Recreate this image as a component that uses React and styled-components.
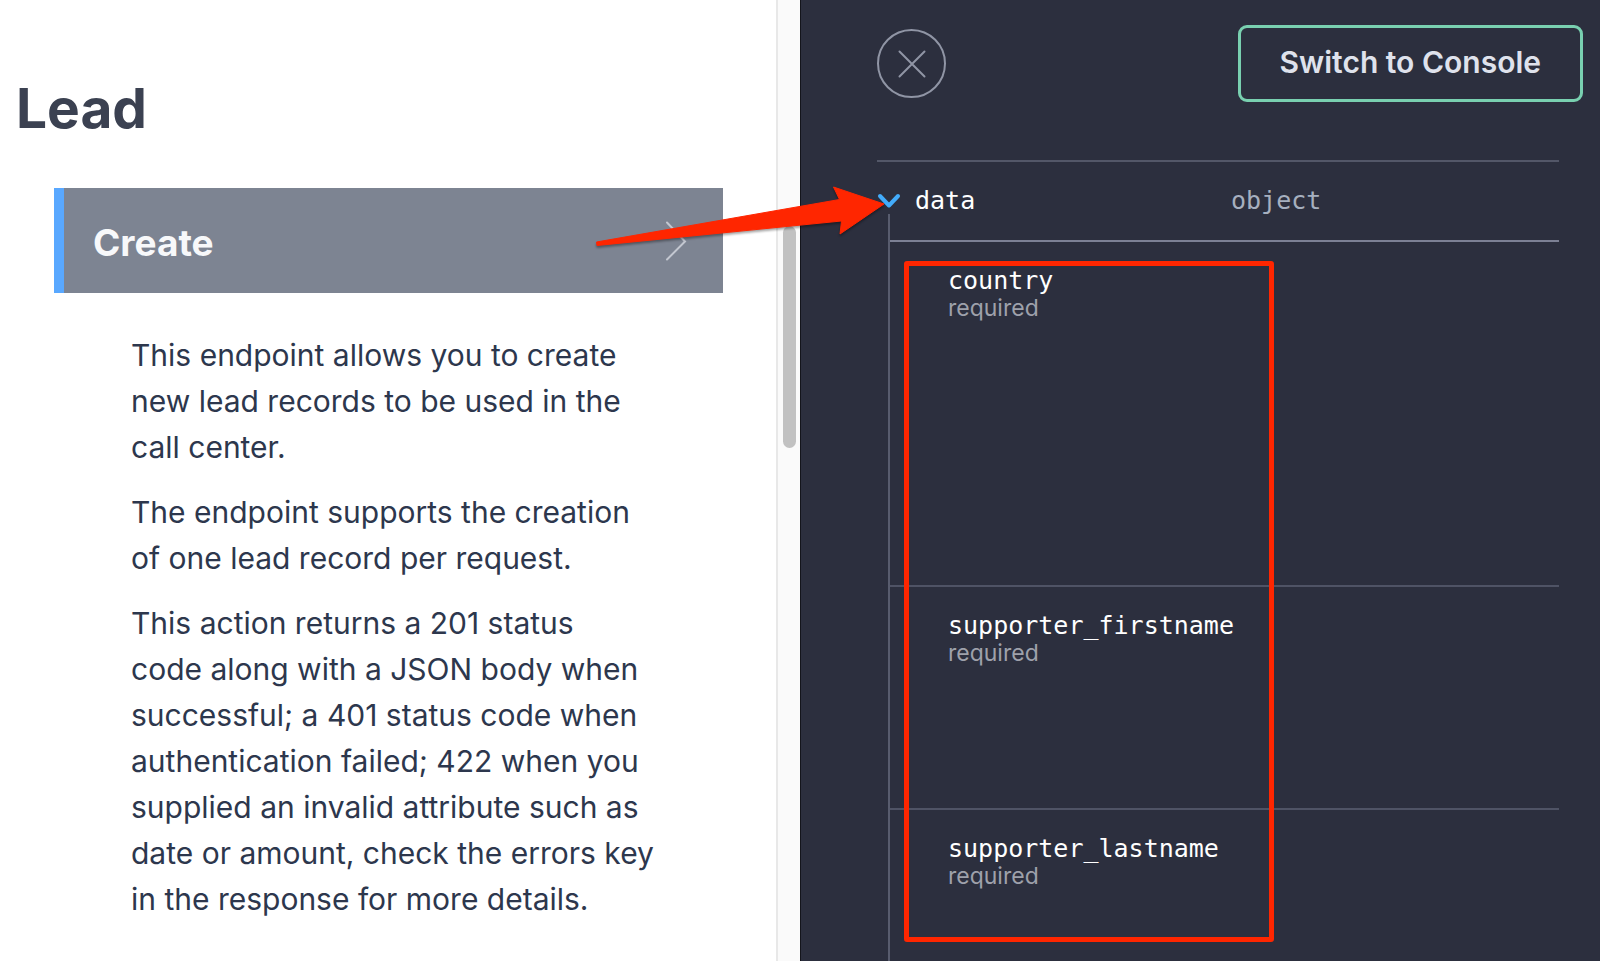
import React, { useState } from "react";
import styled, { createGlobalStyle } from "styled-components";

const GlobalStyle = createGlobalStyle`
  * {
    box-sizing: border-box;
  }

  body {
    margin: 0;
    background: #ffffff;
    font-family: Inter, "Liberation Sans", sans-serif;
  }

  h1, h2, p, ul {
    margin: 0;
    padding: 0;
  }

  button {
    font-family: inherit;
    cursor: pointer;
  }
`;

const Page = styled.div`
  position: relative;
  display: grid;
  grid-template-columns: 1fr 1fr;
  height: 100vh;
  overflow: hidden;
`;

const DocsPane = styled.main`
  display: flex;
  overflow: hidden;
`;

const Docs = styled.div`
  flex: 1;
  padding-top: 72px;
`;

const Title = styled.h1`
  padding-left: 16px;
  color: #3b4151;
  font-size: 55px;
  font-weight: 700;
  line-height: 72px;
`;

const Endpoint = styled.section`
  margin: 44px 53px 0 54px;
`;

const EndpointHeader = styled.button`
  display: flex;
  align-items: center;
  justify-content: space-between;
  width: 100%;
  height: 105px;
  padding: 0 36px 0 29px;
  border: 0;
  border-left: 10px solid #59a8ff;
  background: #7d8492;
  text-align: left;
`;

const EndpointName = styled.span`
  padding-top: 4px;
  color: #f7f8fa;
  font-size: 37px;
  font-weight: 700;
  line-height: 48px;
`;

const Description = styled.div`
  display: flex;
  flex-direction: column;
  gap: 19px;
  padding: 39px 0 0 77px;
`;

const Paragraph = styled.p`
  color: #2d374d;
  font-size: 30px;
  line-height: 46px;
  white-space: pre;
`;

const ScrollTrack = styled.div`
  width: 24px;
  padding: 226px 5px 0;
  border-left: 2px solid #e8e8e8;
  background: #fafafa;
`;

const ScrollThumb = styled.div`
  width: 13px;
  height: 222px;
  border-radius: 7px;
  background: #c1c1c1;
`;

const SchemaPane = styled.aside`
  display: flex;
  flex-direction: column;
  border-left: 1px solid #14151c;
  background: #2c2f3e;
`;

const Toolbar = styled.header`
  display: flex;
  align-items: center;
  justify-content: space-between;
  padding: 25px 17px 0 76px;
`;

const CloseButton = styled.button`
  display: flex;
  align-items: center;
  justify-content: center;
  width: 69px;
  height: 69px;
  padding: 0;
  border: 2px solid #9095a5;
  border-radius: 50%;
  background: transparent;
`;

const ConsoleButton = styled.button`
  height: 77px;
  padding: 0 39px 3px;
  border: 3px solid #79d0b0;
  border-radius: 9px;
  background: transparent;
  color: #dfe2ec;
  font-size: 30px;
  font-weight: 600;
`;

const Schema = styled.div`
  display: flex;
  flex: 1;
  flex-direction: column;
  margin: 58px 41px 0 76px;
  border-top: 2px solid #535768;
`;

const RootRow = styled.div`
  display: grid;
  grid-template-columns: 354px 1fr;
  align-items: center;
  height: 78px;
  font-family: "DejaVu Sans Mono", monospace;
  font-size: 25px;
  line-height: 28px;
`;

const Toggle = styled.button`
  display: flex;
  align-items: center;
  gap: 14px;
  padding: 0;
  border: 0;
  background: transparent;
  color: #ffffff;
  font-family: inherit;
  font-size: inherit;
  line-height: inherit;
`;

const TypeName = styled.span`
  color: #a6afbf;
`;

const FieldTree = styled.div`
  display: flex;
  flex: 1;
  flex-direction: column;
  margin: -26px 0 0 11px;
  padding-top: 26px;
  border-left: 2px solid #585c6e;
`;

const FieldList = styled.ul`
  border-top: 2px solid #7c8094;
  list-style: none;
`;

const Field = styled.li`
  height: ${(props) => props.$height}px;
  padding: 25px 0 0 58px;
  border-bottom: ${(props) => (props.$last ? "0" : "2px solid #4f5365")};
`;

const FieldName = styled.div`
  color: #ffffff;
  font-family: "DejaVu Sans Mono", monospace;
  font-size: 25px;
  line-height: 28px;
`;

const Required = styled.div`
  color: #9ea1ab;
  font-size: 23px;
  line-height: 26px;
`;

// annotations drawn over both panes
const Highlight = styled.div`
  position: absolute;
  top: 261px;
  left: calc(50% + 104px);
  width: 370px;
  height: 681px;
  border: 5px solid #ff2600;
  border-radius: 3px;
  pointer-events: none;
`;

const Arrow = styled.svg`
  position: absolute;
  top: 180px;
  left: calc(50% - 210px);
  filter: drop-shadow(0 2px 1px rgba(0, 0, 0, 0.35));
  pointer-events: none;
`;

const paragraphs = [
  [
    "This endpoint allows you to create",
    "new lead records to be used in the",
    "call center.",
  ],
  ["The endpoint supports the creation", "of one lead record per request."],
  [
    "This action returns a 201 status",
    "code along with a JSON body when",
    "successful; a 401 status code when",
    "authentication failed; 422 when you",
    "supplied an invalid attribute such as",
    "date or amount, check the errors key",
    "in the response for more details.",
  ],
];

const fields = [
  { name: "country", height: 345 },
  { name: "supporter_firstname", height: 223 },
  { name: "supporter_lastname", height: 150 },
];

const App = () => {
  const [open, setOpen] = useState(true);

  return (
    <Page>
      <GlobalStyle />
      <DocsPane>
        <Docs>
          <Title>Lead</Title>
          <Endpoint>
            <EndpointHeader type="button">
              <EndpointName>Create</EndpointName>
              <svg width="22" height="40" viewBox="0 0 22 40" fill="none">
                <path
                  d="M2 1.5 20 20.5 2 38.5"
                  stroke="#c3c7d0"
                  strokeWidth="2"
                  strokeLinecap="round"
                />
              </svg>
            </EndpointHeader>
            <Description>
              {paragraphs.map((lines, index) => (
                <Paragraph key={index}>{lines.join("\n")}</Paragraph>
              ))}
            </Description>
          </Endpoint>
        </Docs>
        <ScrollTrack>
          <ScrollThumb />
        </ScrollTrack>
      </DocsPane>

      <SchemaPane>
        <Toolbar>
          <CloseButton type="button" aria-label="Close">
            <svg width="28" height="28" viewBox="0 0 28 28" fill="none">
              <path
                d="M1.5 1.5 26.5 26.5M26.5 1.5 1.5 26.5"
                stroke="#9095a5"
                strokeWidth="2"
                strokeLinecap="round"
              />
            </svg>
          </CloseButton>
          <ConsoleButton type="button">Switch to Console</ConsoleButton>
        </Toolbar>

        <Schema>
          <RootRow>
            <Toggle
              type="button"
              aria-expanded={open}
              onClick={() => setOpen(!open)}
            >
              <svg width="24" height="16" viewBox="0 0 24 16" fill="none">
                <path
                  d="M3 3 12 12.5 21 3"
                  stroke="#43acfb"
                  strokeWidth="4"
                  strokeLinecap="round"
                  strokeLinejoin="round"
                />
              </svg>
              data
            </Toggle>
            <TypeName>object</TypeName>
          </RootRow>
          {open && (
            <FieldTree>
              <FieldList>
                {fields.map((field, index) => (
                  <Field
                    key={field.name}
                    $height={field.height}
                    $last={index === fields.length - 1}
                  >
                    <FieldName>{field.name}</FieldName>
                    <Required>required</Required>
                  </Field>
                ))}
              </FieldList>
            </FieldTree>
          )}
        </Schema>
      </SchemaPane>

      <Highlight />
      <Arrow width="300" height="70" viewBox="0 0 300 70">
        <path
          d="M6.5 62 249.5 19.5 243.5 7 294 24 250 54 251.5 41 7 65.5Z"
          fill="#ff2600"
          stroke="#ff2600"
          strokeLinejoin="round"
        />
      </Arrow>
    </Page>
  );
};

export default App;
